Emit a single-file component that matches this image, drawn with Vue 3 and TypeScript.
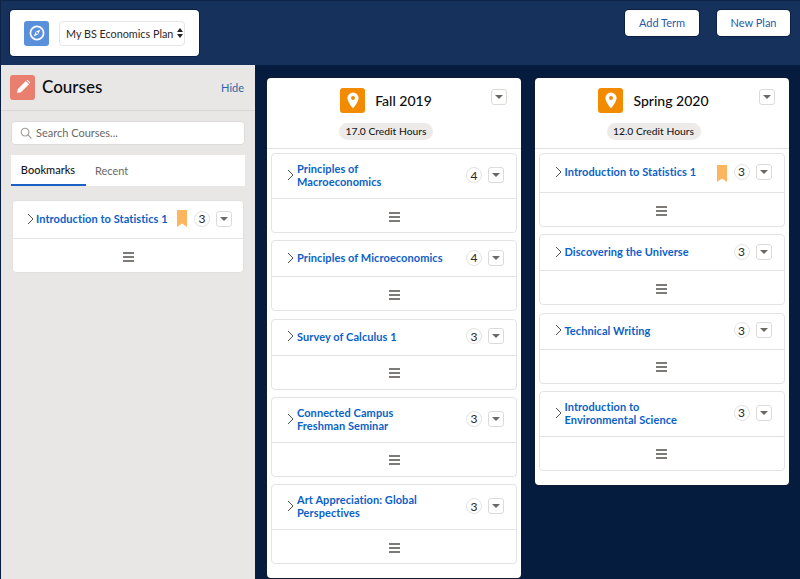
<script setup lang="ts">
interface Course { title: string[]; credits: number; bookmarked?: boolean }
interface Term { name: string; hours: string; courses: Course[] }

const terms: Term[] = [
  {
    name: 'Fall 2019',
    hours: '17.0 Credit Hours',
    courses: [
      { title: ['Principles of', 'Macroeconomics'], credits: 4 },
      { title: ['Principles of Microeconomics'], credits: 4 },
      { title: ['Survey of Calculus 1'], credits: 3 },
      { title: ['Connected Campus', 'Freshman Seminar'], credits: 3 },
      { title: ['Art Appreciation: Global', 'Perspectives'], credits: 3 },
    ],
  },
  {
    name: 'Spring 2020',
    hours: '12.0 Credit Hours',
    courses: [
      { title: ['Introduction to Statistics 1'], credits: 3, bookmarked: true },
      { title: ['Discovering the Universe'], credits: 3 },
      { title: ['Technical Writing'], credits: 3 },
      { title: ['Introduction to', 'Environmental Science'], credits: 3 },
    ],
  },
]
const bookmarks: Course[] = [{ title: ['Introduction to Statistics 1'], credits: 3, bookmarked: true }]
</script>

<template>
  <div class="page">
    <header class="topbar">
      <div class="plan-box">
        <span class="plan-icon">
          <svg width="16" height="16" viewBox="0 0 16 16">
            <circle cx="8" cy="8" r="6.6" fill="none" stroke="#fff" stroke-width="1.7" />
            <path d="M11.4 4.6 9.2 9.2 4.6 11.4 6.8 6.8Z" fill="#fff" />
            <circle cx="8" cy="8" r="1" fill="#5a8fdc" />
          </svg>
        </span>
        <div class="plan-select">
          <span>My BS Economics Plan</span>
          <svg class="updown" width="6" height="10" viewBox="0 0 6 10"><path d="M3 0 6 4H0ZM3 10 0 6H6Z" fill="#222" /></svg>
        </div>
      </div>
      <div class="actions">
        <button class="action">Add Term</button>
        <button class="action">New Plan</button>
      </div>
    </header>

    <main class="main">
      <aside class="side">
        <div class="side-head">
          <span class="pencil">
            <svg width="18" height="18" viewBox="0 0 18 18">
              <path d="M3 15 3.8 11 11.8 3 15 6.2 7 14.2Z" fill="#fff" />
              <path d="M12.7 2.2a1 1 0 0 1 1.4 0l1.7 1.7a1 1 0 0 1 0 1.4l-.2.2-3-3Z" fill="#fff" />
            </svg>
          </span>
          <h1>Courses</h1>
          <a class="hide">Hide</a>
        </div>
        <div class="side-body">
          <label class="search">
            <svg width="12" height="12" viewBox="0 0 13 13">
              <circle cx="5.5" cy="5.5" r="4.2" fill="none" stroke="#a09d9a" stroke-width="1.2" />
              <path d="M8.6 8.6 12 12" stroke="#a09d9a" stroke-width="1.3" stroke-linecap="round" />
            </svg>
            <span>Search Courses...</span>
          </label>
          <nav class="tabs">
            <span class="tab active">Bookmarks</span>
            <span class="tab">Recent</span>
          </nav>
          <div class="course side-course" v-for="c in bookmarks" :key="c.title[0]">
            <div class="course-head">
              <svg class="chev" width="7" height="12" viewBox="0 0 7 12"><path d="M1 1 6 6 1 11" fill="none" stroke="#54504d" stroke-width="1" /></svg>
              <a class="title">{{ c.title[0] }}</a>
              <svg class="mark" width="10" height="17" viewBox="0 0 10 17"><path d="M0 0H10V17L5 13.5 0 17Z" fill="#fdb55f" /></svg>
              <span class="credits">{{ c.credits }}</span>
              <span class="drop"><i></i></span>
            </div>
            <div class="course-foot"><span class="burger"><i></i><i></i><i></i></span></div>
          </div>
        </div>
      </aside>

      <section class="terms">
        <article class="term" v-for="t in terms" :key="t.name">
          <div class="term-head">
            <div class="term-name">
              <span class="pin">
                <svg width="14" height="17" viewBox="0 0 14 17">
                  <path fill-rule="evenodd" d="M7 0.5a5.6 5.6 0 0 1 5.6 5.6C12.6 10 7 16.5 7 16.5S1.4 10 1.4 6.1A5.6 5.6 0 0 1 7 0.5Zm0 3.6a2 2 0 1 0 0 4 2 2 0 0 0 0-4Z" fill="#fff" />
                </svg>
              </span>
              <h2>{{ t.name }}</h2>
            </div>
            <span class="drop term-drop"><i></i></span>
            <span class="hours">{{ t.hours }}</span>
          </div>
          <div class="term-body">
            <div class="course" v-for="c in t.courses" :key="c.title[0]">
              <div class="course-head" :class="{ marked: c.bookmarked }">
                <svg class="chev" width="7" height="12" viewBox="0 0 7 12"><path d="M1 1 6 6 1 11" fill="none" stroke="#54504d" stroke-width="1" /></svg>
                <a class="title">
                  <span v-for="l in c.title" :key="l">{{ l }}</span>
                </a>
                <svg v-if="c.bookmarked" class="mark" width="10" height="17" viewBox="0 0 10 17"><path d="M0 0H10V17L5 13.5 0 17Z" fill="#fdb55f" /></svg>
                <span class="credits">{{ c.credits }}</span>
                <span class="drop"><i></i></span>
              </div>
              <div class="course-foot"><span class="burger"><i></i><i></i><i></i></span></div>
            </div>
          </div>
        </article>
      </section>
    </main>
  </div>
</template>

<style>
html, body { margin: 0; background: #061c3f; }
</style>

<style scoped>
.page {
  width: 800px;
  height: 579px;
  overflow: hidden;
  background: #061c3f;
  font-family: "Lato", "Liberation Sans", sans-serif;
  color: #16161a;
  display: flex;
  flex-direction: column;
}
.topbar {
  height: 65px;
  flex: none;
  box-sizing: border-box;
  background: #16325c;
  border-top: 1px solid #0d2347;
  border-left: 1px solid #0d2347;
  display: flex;
  justify-content: space-between;
  align-items: flex-start;
  padding: 9px 10px 0 9px;
}
.plan-box {
  width: 189px;
  height: 46px;
  box-sizing: border-box;
  background: #fff;
  border-radius: 4px;
  box-shadow: 0 0 0 1px #0b1f42;
  display: flex;
  align-items: center;
  padding-left: 14px;
  gap: 10px;
}
.plan-icon {
  flex: none;
  width: 25px;
  height: 25px;
  background: #5a8fdc;
  border-radius: 3px;
  display: flex;
  align-items: center;
  justify-content: center;
}
.plan-select {
  width: 126px;
  height: 25px;
  box-sizing: border-box;
  border: 1px solid #e5e5e5;
  border-radius: 4px;
  display: flex;
  align-items: center;
  justify-content: space-between;
  padding: 0 0 0 6px;
  font-size: 10.8px;
  color: #2b2826;
  white-space: nowrap;
}
.updown { flex: none; margin-right: 1px; }
.actions { display: flex; gap: 18px; }
.action {
  width: 74px;
  height: 26px;
  font: inherit;
  font-size: 11px;
  color: #1f5aa8;
  background: #fff;
  border: none;
  border-radius: 4px;
  box-shadow: 0 0 0 1px #0b1f42;
  padding: 0 0 2px;
}
.action + .action { width: 73px; }
.main { flex: 1; display: flex; min-height: 0; }
.side {
  width: 254px;
  margin-left: 1px;
  background: #e9e7e5;
  flex: none;
}
.side-head {
  height: 46px;
  box-sizing: border-box;
  border-bottom: 1px solid #d8d6d4;
  display: flex;
  align-items: center;
  padding: 0 11px 1px 9px;
}
.pencil {
  width: 25px;
  height: 25px;
  border-radius: 3px;
  background: #e97f6f;
  display: flex;
  align-items: center;
  justify-content: center;
  margin-right: 7px;
}
.side-head h1 {
  flex: 1;
  margin: 0 0 1px;
  font-size: 17px;
  font-weight: 500;
  color: #0c0c0e;
}
.hide { font-size: 11px; color: #2d66a8; }
.side-body { padding: 10px 10px 0 10px; }
.search {
  height: 24px;
  box-sizing: border-box;
  background: #fff;
  border: 1px solid #dddbda;
  border-radius: 4px;
  display: flex;
  align-items: center;
  gap: 4px;
  padding: 0 0 1px 8px;
  font-size: 11px;
  color: #6b6864;
}
.tabs {
  margin-top: 10px;
  height: 31px;
  box-sizing: border-box;
  background: #fff;
  display: flex;
  align-items: stretch;
  font-size: 11px;
}
.tab {
  display: flex;
  align-items: center;
  justify-content: center;
  padding: 0 9px;
  color: #6b6864;
}
.tab.active {
  width: 75px;
  box-sizing: border-box;
  padding: 0 1px 0 0;
  color: #16161a;
  font-weight: 500;
  border-bottom: 2px solid #1b5fc9;
}
.course {
  background: #fff;
  border: 1px solid #e3e3e3;
  border-radius: 4px;
  box-sizing: border-box;
}
.side-course { margin: 14px 1px 0; border-color: #e2e0de; }
.course-head {
  min-height: 36px;
  box-sizing: border-box;
  padding: 8px 12px 10px 15px;
  display: flex;
  align-items: center;
  border-bottom: 1px solid #e3e3e3;
}
.course-head.marked { padding-top: 7px; padding-bottom: 10px; }
.side-course .course-head { padding: 8px 11px 10px 14px; min-height: 38px; }
.chev { flex: none; margin-right: 3px; }
.side-course .chev { margin-right: 2px; }
.title {
  flex: 1;
  min-width: 0;
  display: flex;
  flex-direction: column;
  color: #0b5fc8;
  font-size: 11px;
  font-weight: 700;
  line-height: 13px;
  letter-spacing: 0.07px;
  white-space: nowrap;
}
.mark { flex: none; margin: 4px 7px 0 0; }
.side-course .mark { margin: 0 7px 0 0; }
.credits {
  flex: none;
  width: 16px;
  height: 16px;
  box-sizing: border-box;
  border: 1px solid #e3e3e3;
  border-radius: 50%;
  display: flex;
  align-items: center;
  justify-content: center;
  font-size: 12px;
  color: #2b2826;
  margin-right: 6px;
}
.drop {
  flex: none;
  width: 16px;
  height: 16px;
  box-sizing: border-box;
  background: #fff;
  border: 1px solid #dddbda;
  border-radius: 3px;
  display: flex;
  align-items: center;
  justify-content: center;
}
.drop i {
  display: block;
  width: 0;
  height: 0;
  border-left: 4px solid transparent;
  border-right: 4px solid transparent;
  border-top: 4px solid #6b6864;
}
.course-foot {
  height: 33px;
  box-sizing: border-box;
  padding-top: 2px;
  display: flex;
  align-items: center;
  justify-content: center;
}
.burger { display: flex; flex-direction: column; gap: 2px; width: 11px; }
.burger i { display: block; height: 2px; background: #7d7a77; }
.terms {
  flex: 1;
  display: flex;
  align-items: flex-start;
  gap: 13.5px;
  padding: 13px 12px 0 12px;
  min-width: 0;
}
.term {
  width: 254px;
  flex: none;
  background: #fff;
  border-radius: 4px;
  box-shadow: 0 0 0 1px #0d1a33;
  box-sizing: border-box;
}
.term-head {
  position: relative;
  height: 71px;
  box-sizing: border-box;
  border-bottom: 1px solid #e3e3e3;
  display: flex;
  flex-direction: column;
  align-items: center;
  padding: 10px 16px 0 0;
}
.term-name {
  display: flex;
  align-items: center;
  gap: 10px;
  height: 25px;
}
.term-drop { position: absolute; top: 11px; right: 14px; }
.pin {
  width: 25px;
  height: 25px;
  background: #f38b00;
  border-radius: 3px;
  display: flex;
  align-items: center;
  justify-content: center;
}
.term-name h2 { margin: 0; font-size: 14px; font-weight: 500; color: #0c0c0e; }
.hours {
  margin-top: 10px;
  height: 17px;
  padding: 0 6.5px;
  background: #ecebea;
  border-radius: 9px;
  font-size: 10.3px;
  line-height: 17px;
  font-weight: 500;
  color: #1d1c1b;
}
.term-body {
  padding: 4px 4px 14px 4px;
  display: flex;
  flex-direction: column;
  gap: 7.25px;
}
</style>
